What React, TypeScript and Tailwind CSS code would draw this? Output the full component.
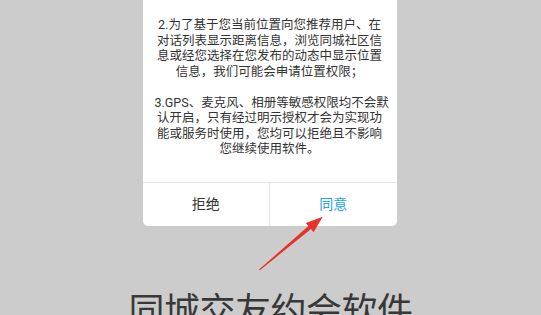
const font = { fontFamily: 'Roboto, "Noto Sans CJK SC", sans-serif' }

const para2 = [
  '2.为了基于您当前位置向您推荐用户、在',
  '对话列表显示距离信息，浏览同城社区信',
  '息或经您选择在您发布的动态中显示位置',
  '信息，我们可能会申请位置权限；',
]

const para3 = [
  '3.GPS、麦克风、相册等敏感权限均不会默',
  '认开启，只有经过明示授权才会为实现功',
  '能或服务时使用，您均可以拒绝且不影响',
  '您继续使用软件。',
]

function Lines({ lines }: { lines: string[] }) {
  return (
    <p>
      {lines.map(line => (
        <span key={line} className="block whitespace-nowrap">{line}</span>
      ))}
    </p>
  )
}

export default function App() {
  return (
    <div className="relative h-[315px] w-full overflow-hidden bg-[#cccccc] flex flex-col items-center" style={font}>
      {/* Permission dialog, top part scrolled out of view */}
      <div className="w-[254px] -mt-[14px] bg-white rounded-b-[5px] -translate-x-[1px]">
        <div className="px-[12px] pb-[25px] text-center text-[12.5px] leading-[15.5px] text-[#333333]">
          <p>定位服务；</p>
          <div className="mt-[15.5px]"><Lines lines={para2} /></div>
          <div className="mt-[15.5px]"><Lines lines={para3} /></div>
        </div>
        <div className="flex h-[44px] border-t border-[#e4e4e4]">
          <button className="flex-1 text-[14px] text-[#333333]">拒绝</button>
          <button className="flex-1 border-l border-[#e4e4e4] text-[14px] text-[#2aa6df]">同意</button>
        </div>
      </div>

      <h1 className="mt-[68px] text-[36px] leading-none font-normal text-[#383838] whitespace-nowrap tracking-[-0.5px]">
        同城交友约会软件
      </h1>

      {/* Red pointer arrow */}
      <svg className="absolute left-0 top-0 w-[541px] h-[315px] pointer-events-none" viewBox="0 0 541 315">
        <polygon
          points="259,269.6 308.4,226.1 305.8,223 322.7,216.7 313.6,232.2 311,229.1 259.6,270.4"
          fill="#e5322a"
        />
      </svg>
    </div>
  )
}
